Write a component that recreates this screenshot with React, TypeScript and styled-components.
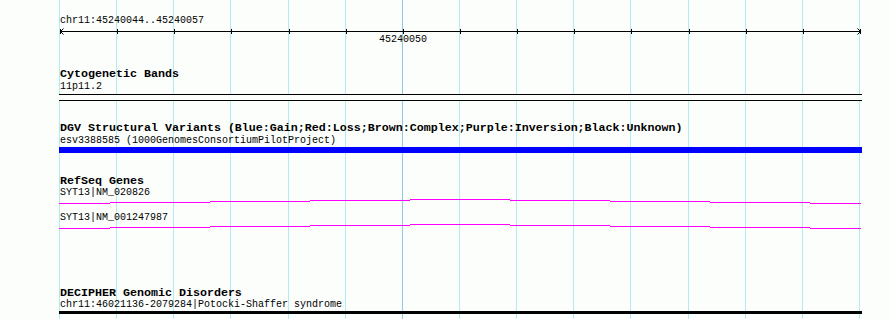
import styled, { createGlobalStyle } from "styled-components";

// Genome browser snapshot: chr11 ruler + a handful of annotation tracks

const GlobalStyle = createGlobalStyle`
  html, body {
    margin: 0;
    padding: 0;
    background: #fcfefc;
  }
`;

const GRID_LEFT = 60;
const GRID_SPAN = 800;
const BASES = 14;
const STEP = GRID_SPAN / BASES;
const TRACK_WIDTH = 803;

// x offsets of the base grid, relative to the track area (which starts at x=59)
const gridXs = Array.from({ length: BASES + 1 }, (_, i) => 1 + i * STEP);

// intron line of the RefSeq genes: 100px pieces that bow upward
const geneSegments = [
  { x: 0, w: 51, y: 5 },
  { x: 51, w: 100, y: 4 },
  { x: 151, w: 100, y: 3 },
  { x: 251, w: 100, y: 2 },
  { x: 351, w: 100, y: 1 },
  { x: 451, w: 100, y: 2 },
  { x: 551, w: 100, y: 3 },
  { x: 651, w: 100, y: 4 },
  { x: 751, w: 51, y: 5 },
];

const Browser = styled.div`
  position: relative;
  width: 890px;
  height: 319px;
  overflow: hidden;
  font-family: "Liberation Mono", "DejaVu Sans Mono", monospace;
  color: #000000;
`;

const GridLayer = styled.svg`
  position: absolute;
  left: 0;
  top: 0;
`;

const Tracks = styled.div`
  position: relative;
  display: flex;
  flex-direction: column;
  width: ${TRACK_WIDTH}px;
  padding: 16px 0 0 59px;
`;

const Label = styled.div<{ $mt?: number; $indent?: number }>`
  font-size: 10px;
  line-height: 10px;
  height: 10px;
  margin-top: ${(p) => p.$mt ?? 0}px;
  padding-left: ${(p) => 1 + (p.$indent ?? 0)}px;
  white-space: nowrap;
`;

const TrackTitle = styled.div<{ $mt: number }>`
  font-size: 11.67px;
  font-weight: 700;
  line-height: 12px;
  height: 12px;
  margin-top: ${(p) => p.$mt}px;
  padding-left: 1px;
  white-space: nowrap;
`;

const BandBox = styled.div`
  box-sizing: border-box;
  height: 7px;
  margin-top: 2px;
  border-top: 1px solid #000000;
  border-bottom: 1px solid #000000;
  background: #fcfefc;
`;

const FeatureBar = styled.div<{ $color: string; $h: number }>`
  height: ${(p) => p.$h}px;
  margin-top: 1px;
  background: ${(p) => p.$color};
`;

const Drawing = styled.svg`
  display: block;
`;

const Ruler = () => (
  <Drawing width={TRACK_WIDTH} height={9}>
    <line x1={1} y1={5.5} x2={802} y2={5.5} stroke="#000" strokeWidth={1} />
    {gridXs.map((x) => (
      <line key={x} x1={Math.round(x) + 0.5} y1={3} x2={Math.round(x) + 0.5} y2={8} stroke="#000" />
    ))}
    <polyline points="4.5,2.5 1.5,5.5 4.5,8.5" fill="none" stroke="#000" />
    <polyline points="798.5,2.5 801.5,5.5 798.5,8.5" fill="none" stroke="#000" />
  </Drawing>
);

const GeneLine = ({ height }: { height: number }) => (
  <Drawing width={TRACK_WIDTH} height={height}>
    {geneSegments.map((s) => (
      <rect key={s.x} x={s.x} y={s.y} width={s.w} height={1} fill="#ff00ff" />
    ))}
  </Drawing>
);

const App = () => {
  return (
    <>
      <GlobalStyle />
      <Browser>
        <GridLayer width={890} height={319}>
          {gridXs.map((x, i) => (
            <rect
              key={x}
              x={Math.round(GRID_LEFT - 1 + x - 1)}
              y={0}
              width={1}
              height={319}
              fill={i === 6 ? "#8ecae2" : "#b2ecf0"}
            />
          ))}
        </GridLayer>
        <Tracks>
          <Label>chr11:45240044..45240057</Label>
          <Ruler />
          <Label $indent={319}>45240050</Label>

          <TrackTitle $mt={23}>Cytogenetic Bands</TrackTitle>
          <Label $mt={2}>11p11.2</Label>
          <BandBox />

          <TrackTitle $mt={21}>
            DGV Structural Variants (Blue:Gain;Red:Loss;Brown:Complex;Purple:Inversion;Black:Unknown)
          </TrackTitle>
          <Label $mt={2}>esv3388585 (1000GenomesConsortiumPilotProject)</Label>
          <FeatureBar $color="#0000ff" $h={6} />

          <TrackTitle $mt={22}>RefSeq Genes</TrackTitle>
          <Label $mt={1}>SYT13|NM_020826</Label>
          <GeneLine height={15} />
          <Label>SYT13|NM_001247987</Label>
          <GeneLine height={7} />

          <TrackTitle $mt={57}>DECIPHER Genomic Disorders</TrackTitle>
          <Label $mt={1}>chr11:46021136-2079284|Potocki-Shaffer syndrome</Label>
          <FeatureBar $color="#000000" $h={3} />
        </Tracks>
      </Browser>
    </>
  );
};

export default App;
